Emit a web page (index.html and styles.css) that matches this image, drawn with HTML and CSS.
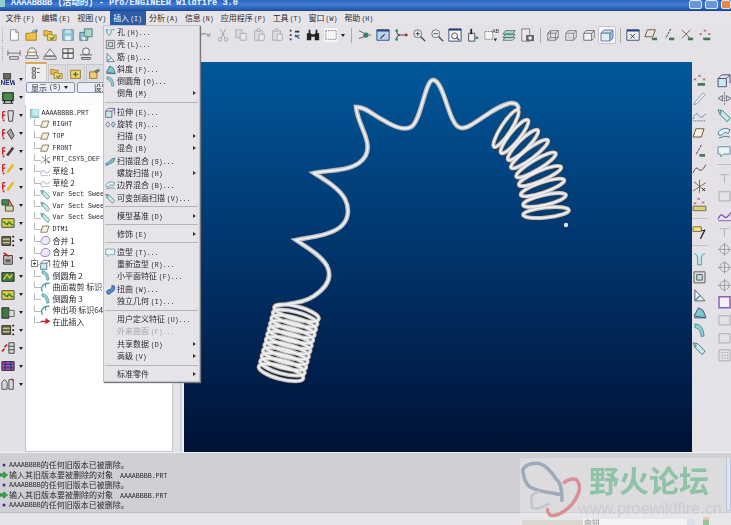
FILE: index.html
```html
<!DOCTYPE html>
<html lang="zh">
<head>
<meta charset="utf-8">
<title>Pro/ENGINEER Wildfire 3.0</title>
<link rel="stylesheet" href="styles.css">
</head>
<body>
<svg class="sprite" xmlns="http://www.w3.org/2000/svg">
<defs>
<symbol id="doc" viewBox="0 0 16 16"><path d="M4 2h6l3 3v9H4zM10 2v3h3" fill="#fff" stroke="#8a8a90"/></symbol>
<symbol id="folder" viewBox="0 0 16 16"><path d="M1 14V6h5l1-1h6v9z" fill="#eec04a" stroke="#a27c24"/><path d="M8 4q3-3 6 0l-1-3M14 4h-3" fill="none" stroke="#3b6fb0"/></symbol>
<symbol id="files" viewBox="0 0 16 16"><path d="M1 9V3h4l1 1h4v5z" fill="#eec04a" stroke="#a27c24"/><path d="M5 14V7h4l1 1h5v6z" fill="#f3d26e" stroke="#a27c24"/><path d="M8 11l2 2 3-3" fill="none" stroke="#2d8a3a" stroke-width="1.4"/></symbol>
<symbol id="save" viewBox="0 0 16 16"><path d="M2 2h12v12H2z" fill="#93c7d8" stroke="#5f869e"/><path d="M5 9h6v5H5z" fill="#e8eef2"/><path d="M5 2h6v4H5z" fill="#c6e2ea"/></symbol>
<symbol id="saveas" viewBox="0 0 16 16"><path d="M1 5h9v9H1z" fill="#8fc3d0" stroke="#466c80"/><path d="M6 1h9v9H6z" fill="#a8d6c4" stroke="#466c80"/><path d="M4 10h3v4H4z" fill="#eee"/></symbol>
<symbol id="dim" viewBox="0 0 16 16"><path d="M1 4v6M15 4v6M1 7h14M3 11h10v3H3z" fill="#ddd" stroke="#666"/></symbol>
<symbol id="dim2" viewBox="0 0 16 16"><path d="M3 9V6a5 5 0 0 1 10 0v3M1 10h14v3H1z" fill="#eee" stroke="#666"/><path d="M3 6h10" stroke="#b0762c"/></symbol>
<symbol id="dim3" viewBox="0 0 16 16"><path d="M8 2l6 8H2zM1 11h14v3H1z" fill="#eee" stroke="#666"/></symbol>
<symbol id="dim4" viewBox="0 0 16 16"><path d="M2 2h12v5H2zM2 7h12v6H2zM8 2v11" fill="#eee" stroke="#444"/></symbol>
<symbol id="dim5" viewBox="0 0 16 16"><circle cx="8" cy="5" r="4" fill="#eee" stroke="#555"/><path d="M1 9h14M3 12h10v2H3z" fill="#ddd" stroke="#555"/></symbol>
<symbol id="redo" viewBox="0 0 16 16"><path d="M2 10a6 5 0 0 1 11-1l1-3M13 9h-3" fill="none" stroke="#9a9aa0" stroke-width="1.2"/></symbol>
<symbol id="cut" viewBox="0 0 16 16"><path d="M5 1l5 10M11 1L6 11" stroke="#a0a0a8" fill="none"/><circle cx="4.5" cy="13" r="2" fill="none" stroke="#a0a0a8"/><circle cx="11.5" cy="13" r="2" fill="none" stroke="#a0a0a8"/></symbol>
<symbol id="copy" viewBox="0 0 16 16"><path d="M2 2h7v9H2z" fill="#dcdce2" stroke="#aaa"/><path d="M7 6h7v8H7z" fill="#e8e8ec" stroke="#aaa"/></symbol>
<symbol id="paste" viewBox="0 0 16 16"><path d="M3 3h9v11H3z" fill="#dddde2" stroke="#aaa"/><path d="M6 1h3v3H6zM8 7h6v7H8z" fill="#ececf0" stroke="#aaa"/></symbol>
<symbol id="regen" viewBox="0 0 16 16"><path d="M3 2v2M3 7v2M3 12v2M8 4h5" stroke="#333" stroke-width="2" fill="none"/><path d="M8 10l5-2" stroke="#2a6f3a" stroke-width="1.5"/><path d="M8 8l5 4" stroke="#2a56a0" stroke-width="1.3"/></symbol>
<symbol id="binoc" viewBox="0 0 16 16"><path d="M1 6h5v8H1zM10 6h5v8h-5zM3 2h2v4H3zM11 2h2v4h-2zM6 7h4v3H6z" fill="#222"/></symbol>
<symbol id="dash" viewBox="0 0 16 16"><path d="M0 0h16v16H0z" fill="#f5f5f6"/><path d="M2 3h12v10H2z" fill="none" stroke="#777" stroke-dasharray="1.5 1"/></symbol>
<symbol id="rep" viewBox="0 0 16 16"><circle cx="9" cy="8" r="3" fill="#2d8070"/><path d="M1 3l6 3M1 12l6-2" stroke="#555"/><path d="M12 8h3" stroke="#a33"/></symbol>
<symbol id="winpen" viewBox="0 0 16 16"><path d="M1 2h14v12H1z" fill="#b8d4ee" stroke="#25457c"/><path d="M1 2h14v2H1z" fill="#25457c"/><path d="M5 12l5-5" stroke="#444" stroke-width="1.4"/></symbol>
<symbol id="node" viewBox="0 0 16 16"><circle cx="3" cy="3" r="1.6" fill="#2a9a55"/><circle cx="3" cy="13" r="1.6" fill="#2a9a55"/><circle cx="14" cy="8" r="1.6" fill="#c02a2a"/><path d="M3 4q0 4 4 4h7M3 12q0-4 4-4" fill="none" stroke="#333"/></symbol>
<symbol id="zin" viewBox="0 0 16 16"><circle cx="6.5" cy="6.5" r="4.5" fill="#eef4f8" stroke="#5c6470"/><path d="M10 10l5 5" stroke="#444" stroke-width="1.6"/><path d="M4 6.5h5M6.5 4v5" stroke="#333"/></symbol>
<symbol id="zout" viewBox="0 0 16 16"><circle cx="6.5" cy="6.5" r="4.5" fill="#eef4f8" stroke="#5c6470"/><path d="M10 10l5 5" stroke="#444" stroke-width="1.6"/><path d="M4 6.5h5" stroke="#333"/></symbol>
<symbol id="zwin" viewBox="0 0 16 16"><path d="M1 1h14v14H1z" fill="#f4f6f8" stroke="#25457c"/><path d="M1 1h14v2H1z" fill="#25457c"/><circle cx="7.5" cy="9" r="3.4" fill="none" stroke="#444"/><path d="M10 11l3 3" stroke="#444" stroke-width="1.3"/></symbol>
<symbol id="spin" viewBox="0 0 16 16"><path d="M3 6h7v9H3z" fill="#eee" stroke="#444"/><path d="M6 1v6" stroke="#222" stroke-width="2"/><path d="M11 9l4 2-4 2z" fill="#2a7a6a"/></symbol>
<symbol id="ab" viewBox="0 0 16 16"><path d="M1 4h9v9H1z" fill="#f4f4f4" stroke="#777" stroke-dasharray="2 1"/><text x="9" y="6" font-size="6" fill="#333" font-family="Liberation Sans">AB</text><path d="M11 12h4l-2 3z" fill="#222"/></symbol>
<symbol id="layers" viewBox="0 0 16 16"><path d="M4 3h11l-3 4H1zM4 7h11l-3 4H1z" fill="#a8d8c8" stroke="#49786c"/><path d="M4 11h11l-3 3H1z" fill="none" stroke="#49786c"/></symbol>
<symbol id="cam" viewBox="0 0 16 16"><path d="M2 1h9v14H2z" fill="#e8e8ec" stroke="#777"/><path d="M7 8h9v7H7z" fill="#666"/><circle cx="11.5" cy="11.5" r="2" fill="#eee"/></symbol>
<symbol id="cube1" viewBox="0 0 16 16"><path d="M2 6h9v8H2zM5 3h9v8H5zM2 6l3-3M11 6l3-3M2 14l3-3M11 14l3-3" fill="none" stroke="#777"/></symbol>
<symbol id="cube2" viewBox="0 0 16 16"><path d="M2 6h9v8H2zM2 6l3-3h9l-3 3M11 14l3-3V3" fill="none" stroke="#777"/><path d="M5 3v8h9" fill="none" stroke="#aaa" stroke-dasharray="1.5 1"/></symbol>
<symbol id="cube3" viewBox="0 0 16 16"><path d="M2 6h9v8H2zM2 6l3-3h9l-3 3M11 14l3-3V3" fill="#f2f2f4" stroke="#666"/></symbol>
<symbol id="cube4" viewBox="0 0 16 16"><path d="M2 6h9v8H2z" fill="#d8f2f2" stroke="#77a"/><path d="M2 6l3-3h9l-3 3z" fill="#bfe6ec" stroke="#77a"/><path d="M11 14l3-3V3l-3 3z" fill="#7fc8d4" stroke="#77a"/></symbol>
<symbol id="dtmx" viewBox="0 0 16 16"><path d="M1 2h14v12H1z" fill="#f4f4f4" stroke="#25457c"/><path d="M1 2h14v2H1z" fill="#25457c"/><path d="M5 7l5 5M10 7l-5 5" stroke="#222"/></symbol>
<symbol id="plane" viewBox="0 0 16 16"><path d="M4 3h9l-3 9H1z" fill="#f6f1e0" stroke="#6a4a30"/></symbol>
<symbol id="planeg" viewBox="0 0 16 16"><path d="M4 2h9l-3 8H1z" fill="none" stroke="#6a4a30"/><path d="M9 11h6v3H9z" fill="#3f7a54"/></symbol>
<symbol id="axis" viewBox="0 0 16 16"><path d="M10 1L4 12" stroke="#333" stroke-dasharray="3 1"/><path d="M8 11h6v3H8z" fill="#3f7a54"/></symbol>
<symbol id="csysg" viewBox="0 0 16 16"><path d="M2 2l10 10M12 2L2 12" stroke="#7a5a40"/><path d="M9 11h6v3H9z" fill="#3f7a54"/></symbol>
<symbol id="ptsg" viewBox="0 0 16 16"><path d="M7 2l2 2M9 2L7 4M2 6l2 2M4 6L2 8M12 6l2 2M14 6l-2 2" stroke="#a03a3a"/><path d="M6 11h8v3H6z" fill="#3f7a54"/></symbol>
<symbol id="pen" viewBox="0 0 16 16"><path d="M12 2l2 2-9 10-3 1 1-3z" fill="#eef2f6" stroke="#8a96a6"/></symbol>
<symbol id="sk" viewBox="0 0 16 16"><path d="M1 12q3-9 6-4t8-2" fill="none" stroke="#3563a8" stroke-dasharray="2 1"/><path d="M1 14h14" stroke="#555" stroke-dasharray="1 1"/></symbol>
<symbol id="curve" viewBox="0 0 16 16"><path d="M1 13q3-8 6-4t8-5" fill="none" stroke="#5a3a30"/></symbol>
<symbol id="csys" viewBox="0 0 16 16"><path d="M8 1v14M1 13L15 4M2 3l12 10" stroke="#8a5f3a" fill="none"/><path d="M11 10l3 3M14 10l-3 3" stroke="#222"/></symbol>
<symbol id="pts" viewBox="0 0 16 16"><path d="M6 1l2 2M8 1L6 3M2 6l2 2M4 6L2 8M11 5l2 2M13 5l-2 2" stroke="#a03a3a"/><path d="M1 10h14v5H1z" fill="#e0d070" stroke="#665"/></symbol>
<symbol id="ann" viewBox="0 0 16 16"><path d="M1 2h9v5H1z" fill="#f2e68a" stroke="#7a6a20"/><path d="M14 5L9 15" stroke="#222" stroke-width="1.4"/><path d="M10 6h4" stroke="#222"/></symbol>
<symbol id="hole" viewBox="0 0 16 16"><path d="M2 4q1 8 4 8t3-8M9 4h5" fill="none" stroke="#43a7a7" stroke-width="1.4"/><path d="M2 4h3" stroke="#555"/></symbol>
<symbol id="shell" viewBox="0 0 16 16"><path d="M2 2h12v12H2z" fill="#ddd" stroke="#555"/><path d="M5 5h6v6H5z" fill="#b9e0e4" stroke="#555"/></symbol>
<symbol id="rib" viewBox="0 0 16 16"><path d="M3 2v12h11z" fill="#e8f2f2" stroke="#557"/><path d="M3 14l6-6" stroke="#3a9a9a" stroke-width="1.5"/></symbol>
<symbol id="draft" viewBox="0 0 16 16"><path d="M2 12l5-9 5 3 3 8z" fill="#7cc8c4" stroke="#357"/><path d="M2 14h12" stroke="#357"/></symbol>
<symbol id="round" viewBox="0 0 16 16"><path d="M3 1q9 0 10 13l-3 1Q9 6 3 5z" fill="#8fd0d4" stroke="#4a8a90"/></symbol>
<symbol id="ext" viewBox="0 0 16 16"><path d="M1 6h9v9H1z" fill="#c4ecec" stroke="#447"/><path d="M5 2h9v9" fill="none" stroke="#447"/><path d="M10 6l4-4M1 6l4-4" stroke="#447"/></symbol>
<symbol id="rev" viewBox="0 0 16 16"><path d="M1 8l3-4 3 4-3 4z" fill="none" stroke="#557"/><path d="M9 8l3-4 3 4-3 4z" fill="#aadada" stroke="#557"/></symbol>
<symbol id="sweep" viewBox="0 0 16 16"><path d="M1 11l4-2 5-5 5-1-3 6-6 3-4 2z" fill="#6cc4c4" stroke="#3a7a8a"/></symbol>
<symbol id="bound" viewBox="0 0 16 16"><path d="M1 7q6-7 13-3l-2 4-4-1-3 3H2z" fill="#e4f2f4" stroke="#447a9a"/><path d="M2 13q6-3 12-1" fill="none" stroke="#447a9a"/></symbol>
<symbol id="var" viewBox="0 0 16 16"><path d="M1 2l5 1 8 8-3 4-8-8z" fill="#cfe8e8" stroke="#3a7a8a"/><path d="M4 2v5" stroke="#3a7a8a"/></symbol>
<symbol id="style" viewBox="0 0 16 16"><path d="M1 3h13v8H7l-3 3v-3H1z" fill="#e8f6f8" stroke="#5a8aa6"/></symbol>
<symbol id="warp" viewBox="0 0 16 16"><path d="M3 14q-2-5 3-6t4-6l4 1q1 7-4 9t-3 3z" fill="#4a8ad0" stroke="#24508a"/></symbol>
<symbol id="merge" viewBox="0 0 16 16"><path d="M6 2q6-1 8 3t-2 8q-5 2-9 0T2 7q1-4 4-5z" fill="#efe6f6" stroke="#7a5ea6"/></symbol>
<symbol id="trim" viewBox="0 0 16 16"><path d="M14 2Q6 1 3 7q-2 4 1 7" fill="none" stroke="#4aa0a0" stroke-width="2"/><path d="M8 3v5" stroke="#555"/></symbol>
<symbol id="ins" viewBox="0 0 16 16"><path d="M1 8h7V4l7 4.500-7 4.500V10H1z" fill="#c4202a" transform="translate(0 -1)"/></symbol>
<symbol id="newf" viewBox="0 0 16 16"><path d="M3 0h8v7H3z" fill="#6a6a5c" stroke="#333"/><text x="-.5" y="14" font-size="7.500" font-weight="700" fill="#1c2a70" font-family="Liberation Sans">NEW</text></symbol>
<symbol id="gbox" viewBox="0 0 16 16"><path d="M2 2h12v9H2z" fill="#4c8a4a" stroke="#1f2a20" stroke-width="1.400"/><path d="M4 11v3M12 11v3M2 14h12" stroke="#222" stroke-width="1.400"/></symbol>
<symbol id="gfeat" viewBox="0 0 16 16"><path d="M1 2h8v6H1z" fill="#4c8a4a" stroke="#243"/><path d="M5 9h9v6H5z" fill="#d9d9a0" stroke="#443"/><path d="M9 2l4 7" stroke="#c02020" stroke-width="1.4"/></symbol>
<symbol id="fl1" viewBox="0 0 16 16"><path d="M2 3h3M2 3v8M2 7h3" stroke="#c92020" stroke-width="1.6" fill="none"/><path d="M2 13h2" stroke="#c92020" stroke-width="2"/><path d="M8 2h6v4l-1 8h-4L8 6z" fill="#dcdce2" stroke="#333"/></symbol>
<symbol id="fl2" viewBox="0 0 16 16"><path d="M2 3h3M2 3v8M2 7h3" stroke="#c92020" stroke-width="1.6" fill="none"/><path d="M2 13h2" stroke="#c92020" stroke-width="2"/><path d="M7 6l4-4 4 8-3 4z" fill="#9aa3a6" stroke="#333"/></symbol>
<symbol id="fl3" viewBox="0 0 16 16"><path d="M2 3h3M2 3v8M2 7h3" stroke="#c92020" stroke-width="1.6" fill="none"/><path d="M2 13h2" stroke="#c92020" stroke-width="2"/><path d="M7 12l7-9" stroke="#444" stroke-width="3"/></symbol>
<symbol id="fl4" viewBox="0 0 16 16"><path d="M2 3h3M2 3v8M2 7h3" stroke="#c92020" stroke-width="1.6" fill="none"/><path d="M2 13h2" stroke="#c92020" stroke-width="2"/><path d="M7 12l7-9" stroke="#e0c020" stroke-width="3"/></symbol>
<symbol id="g1" viewBox="0 0 16 16"><path d="M1 3h14v10H1z" fill="#3f7a3f" stroke="#222"/><path d="M3 11l4-6 3 4 3-4" fill="none" stroke="#e8d040" stroke-width="1.4"/></symbol>
<symbol id="g2" viewBox="0 0 16 16"><path d="M1 3h14v10H1z" fill="#dcc838" stroke="#444"/><path d="M2 6l5 4 2-3 5 4" fill="none" stroke="#284" stroke-width="1.6"/></symbol>
<symbol id="g3" viewBox="0 0 16 16"><path d="M1 2h8v12H1z" fill="#3f7a3f" stroke="#222"/><path d="M9 5h6v7H9z" fill="#ddd" stroke="#555"/></symbol>
<symbol id="g4" viewBox="0 0 16 16"><path d="M1 3h10v10H1z" fill="#6c6c3c" stroke="#222"/><path d="M2 6h8M2 10h8" stroke="#eee"/><path d="M13 3h2M13 8h2M13 13h2" stroke="#222" stroke-width="2"/></symbol>
<symbol id="g5" viewBox="0 0 16 16"><path d="M1 12l3-3M4 7l3-3" stroke="#c02020" stroke-width="2"/><path d="M9 2h6v12H9z" fill="#ddd" stroke="#333"/><path d="M9 6h6M9 10h6" stroke="#333"/></symbol>
<symbol id="g6" viewBox="0 0 16 16"><path d="M1 3h14v10H1z" fill="#b048a0" stroke="#223"/><path d="M2 6h12M2 10h12M5 3v10M11 3v10" stroke="#20408a" stroke-width="1.4"/></symbol>
<symbol id="g7" viewBox="0 0 16 16"><path d="M1 14V6l3-3 3 3v8zM9 14V3h5v11z" fill="#d8d8d8" stroke="#445"/><path d="M12 2l2 2" stroke="#c02020" stroke-width="1.6"/></symbol>
<symbol id="g8" viewBox="0 0 16 16"><path d="M3 4h10v10H3z" fill="#bdbdb5" stroke="#333"/><path d="M3 1l6 4" stroke="#c02020" stroke-width="2"/><path d="M5 8h6v4H5z" fill="#666"/></symbol>
<symbol id="mir" viewBox="0 0 16 16"><path d="M8 1v14" stroke="#777" stroke-dasharray="2 1"/><path d="M6 5L1 8l5 3zM10 5l5 3-5 3z" fill="#cfe4ea" stroke="#667"/></symbol>
<symbol id="tee" viewBox="0 0 16 16"><path d="M2 2q4 0 4 6v6h4V8q0-6 4-6" fill="#bfeef0" stroke="#5a8a96"/></symbol>
<symbol id="cl" viewBox="0 0 16 16"><path d="M3 4h10M8 4v9" stroke="#b0b0b8" fill="none"/></symbol>
<symbol id="circ" viewBox="0 0 16 16"><circle cx="8" cy="8" r="5" fill="none" stroke="#9a9aa0"/><path d="M8 1v14M1 8h14" stroke="#9a9aa0"/></symbol>
<symbol id="box" viewBox="0 0 16 16"><path d="M2 2h12v12H2z" fill="#f3f0f8" stroke="#8a60b0" stroke-width="1.6"/></symbol>
<symbol id="box2" viewBox="0 0 16 16"><path d="M2 3h12v10H2z" fill="none" stroke="#a8a8b0"/></symbol>
<symbol id="grid" viewBox="0 0 16 16"><path d="M2 2h12v12H2z" fill="none" stroke="#a8a8b0"/><path d="M5 5h1M8 5h1M11 5h1M5 8h1M8 8h1M11 8h1M5 11h1M8 11h1M11 11h1" stroke="#777"/></symbol>
<symbol id="wave" viewBox="0 0 16 16"><path d="M1 13q3-7 6-3t8-4" fill="none" stroke="#7a4ab0" stroke-width="1.4"/><path d="M1 15h14" stroke="#7a4ab0"/></symbol>
<symbol id="tabt" viewBox="0 0 16 16"><path d="M4 2h4v3H4zM4 7h4v3H4zM4 12h4v3H4zM10 3h3M10 8h3" fill="#eee" stroke="#444"/></symbol>
<symbol id="tabb" viewBox="0 0 16 16"><path d="M2 14V4h12v10z" fill="#f0d070" stroke="#8a6a20"/><path d="M8 6v6M5 9h6" stroke="#3a7a3a" stroke-width="1.5"/></symbol>
<symbol id="tabm" viewBox="0 0 16 16"><path d="M2 14V6h9v8z" fill="#f0d070" stroke="#8a6a20"/><path d="M7 5l6-3 2 3-5 3z" fill="#777"/></symbol>
<symbol id="part" viewBox="0 0 16 16"><path d="M2 2h12v12H2z" fill="#8ed8dc" stroke="#7a9aa8"/><path d="M5 2h9v9H5z" fill="#c8eef0"/></symbol>
<symbol id="msgi" viewBox="0 0 10 10"><circle cx="5" cy="5" r="1.9" fill="#2a3a8c"/></symbol>
<symbol id="msga" viewBox="0 0 10 10"><path d="M0 3.500h4.500V1L9.500 5 4.500 9V6.500H0z" fill="#37a84a" stroke="#157034" stroke-width=".7"/></symbol>
</defs>
</svg>

<div class="app">
  <header class="title">
    <i class="title-ic"></i>
    <span class="title-text">AAAABBBB (活动的) - Pro/ENGINEER Wildfire 3.0</span>
    <div class="win-btns"><i class="wb"></i><i class="wb"></i><i class="wb wb-x"></i></div>
  </header>

  <nav class="menubar">
    <span class="mi">文件<b>(F)</b></span><span class="mi">编辑<b>(E)</b></span><span class="mi">视图<b>(V)</b></span><span class="mi on">插入<b>(I)</b></span><span class="mi">分析<b>(A)</b></span><span class="mi">信息<b>(N)</b></span><span class="mi">应用程序<b>(P)</b></span><span class="mi">工具<b>(T)</b></span><span class="mi">窗口<b>(W)</b></span><span class="mi">帮助<b>(H)</b></span>
  </nav>

  <div class="tb">
    <i class="grip"></i>
    <svg class="t"><use href="#doc"/></svg><svg class="t"><use href="#folder"/></svg><svg class="t"><use href="#files"/></svg><svg class="t"><use href="#save"/></svg><svg class="t"><use href="#saveas"/></svg>
    <span class="tgap"></span>
    <svg class="t"><use href="#redo"/></svg><svg class="t"><use href="#cut"/></svg><svg class="t"><use href="#copy"/></svg><svg class="t"><use href="#paste"/></svg><svg class="t"><use href="#paste"/></svg><svg class="t"><use href="#regen"/></svg><svg class="t"><use href="#binoc"/></svg><svg class="t"><use href="#dash"/></svg>
    <i class="drop"></i><i class="sep sep-a"></i>
    <svg class="t"><use href="#rep"/></svg><svg class="t"><use href="#winpen"/></svg><svg class="t"><use href="#node"/></svg><svg class="t"><use href="#zin"/></svg><svg class="t"><use href="#zout"/></svg><svg class="t"><use href="#zwin"/></svg><svg class="t"><use href="#spin"/></svg><svg class="t"><use href="#ab"/></svg><svg class="t"><use href="#layers"/></svg><svg class="t"><use href="#cam"/></svg>
    <i class="sep"></i>
    <svg class="t"><use href="#cube1"/></svg><svg class="t"><use href="#cube2"/></svg><svg class="t"><use href="#cube3"/></svg><svg class="t t-on"><use href="#cube4"/></svg>
    <i class="sep"></i>
    <svg class="t"><use href="#dtmx"/></svg><svg class="t"><use href="#planeg"/></svg><svg class="t"><use href="#axis"/></svg><svg class="t"><use href="#csysg"/></svg><svg class="t"><use href="#ptsg"/></svg>
  </div>
  <div class="tb">
    <i class="grip"></i>
    <svg class="t"><use href="#dim"/></svg><svg class="t"><use href="#dim2"/></svg><svg class="t"><use href="#dim3"/></svg><svg class="t"><use href="#dim4"/></svg><svg class="t"><use href="#dim5"/></svg>
  </div>

  <div class="main">
    <aside class="ltools">
      <div class="lt"><svg class="l"><use href="#newf"/></svg><i class="drop"></i></div>
      <div class="lt"><svg class="l"><use href="#gbox"/></svg><i class="drop"></i></div>
      <div class="lt"><svg class="l"><use href="#fl1"/></svg><i class="drop"></i></div>
      <div class="lt"><svg class="l"><use href="#fl2"/></svg><i class="drop"></i></div>
      <div class="lt"><svg class="l"><use href="#fl3"/></svg><i class="drop"></i></div>
      <div class="lt"><svg class="l"><use href="#fl4"/></svg><i class="drop"></i></div>
      <div class="lt"><svg class="l"><use href="#fl4"/></svg><i class="drop"></i></div>
      <div class="lt"><svg class="l"><use href="#gfeat"/></svg><i class="drop"></i></div>
      <div class="lt"><svg class="l"><use href="#g2"/></svg><i class="drop"></i></div>
      <div class="lt"><svg class="l"><use href="#g4"/></svg><i class="drop"></i></div>
      <div class="lt"><svg class="l"><use href="#g8"/></svg><i class="drop"></i></div>
      <div class="lt"><svg class="l"><use href="#g1"/></svg><i class="drop"></i></div>
      <div class="lt"><svg class="l"><use href="#g2"/></svg><i class="drop"></i></div>
      <div class="lt"><svg class="l"><use href="#g3"/></svg><i class="drop"></i></div>
      <div class="lt"><svg class="l"><use href="#g4"/></svg><i class="drop"></i></div>
      <div class="lt"><svg class="l"><use href="#g5"/></svg><i class="drop"></i></div>
      <div class="lt"><svg class="l"><use href="#g6"/></svg><i class="drop"></i></div>
      <div class="lt"><svg class="l"><use href="#g7"/></svg><i class="drop"></i></div>
    </aside>

    <section class="panel">
      <div class="tabs">
        <span class="tab tab-on"><svg class="tabi"><use href="#tabt"/></svg></span>
        <span class="tab"><svg class="tabi"><use href="#files"/></svg></span>
        <span class="tab"><svg class="tabi"><use href="#tabb"/></svg></span>
        <span class="tab"><svg class="tabi"><use href="#tabm"/></svg></span>
      </div>
      <div class="pbtns">
        <span class="pbtn pbtn-a">显示<b>(S)</b><i class="drop"></i></span>
        <span class="pbtn pbtn-b">设置</span>
      </div>
      <ul class="tree">
        <li class="root"><svg class="n"><use href="#part"/></svg><b>AAAABBBB.PRT</b></li>
        <li><svg class="n"><use href="#plane"/></svg><b>RIGHT</b></li>
        <li><svg class="n"><use href="#plane"/></svg><b>TOP</b></li>
        <li><svg class="n"><use href="#plane"/></svg><b>FRONT</b></li>
        <li><svg class="n"><use href="#csys"/></svg><b>PRT_CSYS_DEF</b></li>
        <li><svg class="n"><use href="#sk"/></svg>草绘 1</li>
        <li><svg class="n"><use href="#sk"/></svg>草绘 2</li>
        <li><svg class="n"><use href="#var"/></svg><b>Var Sect Sweep</b></li>
        <li><svg class="n"><use href="#var"/></svg><b>Var Sect Sweep</b></li>
        <li><svg class="n"><use href="#var"/></svg><b>Var Sect Sweep</b></li>
        <li><svg class="n"><use href="#plane"/></svg><b>DTM1</b></li>
        <li><svg class="n"><use href="#merge"/></svg>合并 1</li>
        <li><svg class="n"><use href="#merge"/></svg>合并 2</li>
        <li><i class="plus"></i><svg class="n"><use href="#ext"/></svg>拉伸 1</li>
        <li><svg class="n"><use href="#round"/></svg>倒圆角 2</li>
        <li><svg class="n"><use href="#trim"/></svg>曲面裁剪 标识</li>
        <li><svg class="n"><use href="#round"/></svg>倒圆角 3</li>
        <li><svg class="n"><use href="#trim"/></svg>伸出项 标识64</li>
        <li><svg class="n"><use href="#ins"/></svg>在此插入</li>
      </ul>
    </section>

    <div class="gutter"></div>

    <div class="view">
      <svg class="spring" viewBox="183 62 508 389" xmlns="http://www.w3.org/2000/svg">
        <defs>
          <path id="wire" d="M275 306C290 303 303 303 313 296C328 286 331 276 326 266C320 255 305 247 295 240C310 237 326 236 338 228C348 221 349 209 344 199C338 188 324 180 313 173C325 170 345 172 358 163C368 156 368 147 365 138C362 128 356 118 355 107C365 107 372 115 382 120C392 126 402 131 410 127C420 122 424 80 432 80C441 80 446 110 452 120C456 129 462 130 470 125C482 118 497 105 510 103C516 103 518 106 517 110"/>
          <g id="coilA">
            <ellipse cx="295.500" cy="313" rx="23" ry="6.500" transform="rotate(15 295.500 313)"/>
            <ellipse cx="294.100" cy="318.400" rx="23" ry="6.500" transform="rotate(15 294.100 318.400)"/>
            <ellipse cx="292.700" cy="323.800" rx="23" ry="6.500" transform="rotate(15 292.700 323.800)"/>
            <ellipse cx="291.300" cy="329.200" rx="23" ry="6.500" transform="rotate(15 291.300 329.200)"/>
            <ellipse cx="289.900" cy="334.600" rx="23" ry="6.500" transform="rotate(15 289.900 334.600)"/>
            <ellipse cx="288.500" cy="340" rx="23" ry="6.500" transform="rotate(15 288.500 340)"/>
            <ellipse cx="287.100" cy="345.400" rx="23" ry="6.500" transform="rotate(15 287.100 345.400)"/>
            <ellipse cx="285.700" cy="350.800" rx="23" ry="6.500" transform="rotate(15 285.700 350.800)"/>
            <ellipse cx="284.300" cy="356.200" rx="23" ry="6.500" transform="rotate(15 284.300 356.200)"/>
            <ellipse cx="282.900" cy="361.600" rx="23" ry="6.500" transform="rotate(15 282.900 361.600)"/>
            <ellipse cx="281.500" cy="367" rx="23" ry="6.500" transform="rotate(15 281.500 367)"/>
            <ellipse cx="280" cy="372.500" rx="23" ry="6.500" transform="rotate(15 280 372.500)"/>
          </g>
          <g id="coilB">
            <ellipse cx="505" cy="128.500" rx="22" ry="5" transform="rotate(-57 505 128.500)"/>
            <ellipse cx="513.500" cy="136.500" rx="21.300" ry="5" transform="rotate(-51 513.500 136.500)"/>
            <ellipse cx="522" cy="145" rx="21" ry="5" transform="rotate(-45 522 145)"/>
            <ellipse cx="528.500" cy="154" rx="23" ry="5" transform="rotate(-37 528.500 154)"/>
            <ellipse cx="535" cy="165" rx="23" ry="5" transform="rotate(-31 535 165)"/>
            <ellipse cx="539" cy="176" rx="23" ry="5" transform="rotate(-23 539 176)"/>
            <ellipse cx="541.500" cy="187.500" rx="23" ry="5" transform="rotate(-19 541.500 187.500)"/>
            <ellipse cx="543.500" cy="200" rx="22" ry="5" transform="rotate(-13 543.500 200)"/>
            <ellipse cx="545" cy="212.500" rx="23" ry="5" transform="rotate(-6 545 212.500)"/>
          </g>
        </defs>
        <use class="w-edge" href="#wire"/>
        <g class="w-out"><use href="#coilA"/><use href="#coilB"/></g>
        <g class="w-mid"><use href="#wire"/><use href="#coilA"/><use href="#coilB"/></g>
        <g class="w-hi"><use href="#wire"/><use href="#coilA"/><use href="#coilB"/></g>
        <circle class="w-dot" cx="565" cy="225" r="2.200"/>
      </svg>
    </div>

    <aside class="rtools">
      <div class="rcol">
        <svg class="r"><use href="#ptsg"/></svg>
        <svg class="r"><use href="#pen"/></svg>
        <svg class="r"><use href="#sk"/></svg>
        <svg class="r"><use href="#plane"/></svg>
        <svg class="r"><use href="#axis"/></svg>
        <svg class="r"><use href="#curve"/></svg>
        <svg class="r"><use href="#csys"/></svg>
        <svg class="r"><use href="#pts"/></svg>
        <i class="rsep"></i>
        <svg class="r"><use href="#ann"/></svg>
        <i class="rsep"></i>
        <svg class="r"><use href="#tee"/></svg>
        <svg class="r"><use href="#shell"/></svg>
        <svg class="r"><use href="#rib"/></svg>
        <svg class="r"><use href="#draft"/></svg>
        <svg class="r"><use href="#round"/></svg>
        <svg class="r"><use href="#var"/></svg>
      </div>
      <div class="rcol">
        <svg class="r"><use href="#ext"/></svg>
        <svg class="r"><use href="#mir"/></svg>
        <svg class="r"><use href="#var"/></svg>
        <svg class="r"><use href="#bound"/></svg>
        <svg class="r"><use href="#style"/></svg>
        <i class="rsep"></i>
        <svg class="r"><use href="#cl"/></svg>
        <svg class="r"><use href="#box2"/></svg>
        <svg class="r"><use href="#wave"/></svg>
        <svg class="r"><use href="#cl"/></svg>
        <svg class="r"><use href="#circ"/></svg>
        <svg class="r"><use href="#circ"/></svg>
        <svg class="r"><use href="#circ"/></svg>
        <svg class="r"><use href="#box"/></svg>
        <svg class="r"><use href="#box2"/></svg>
        <svg class="r"><use href="#box2"/></svg>
        <svg class="r"><use href="#grid"/></svg>
      </div>
    </aside>
  </div>

  <section class="msgs">
    <p><svg class="m"><use href="#msgi"/></svg><b>AAAABBBB</b>的任何旧版本已被删除。</p>
    <p><svg class="m"><use href="#msga"/></svg>输入其旧版本要被删除的对象<b class="fn">AAAABBBB.PRT</b></p>
    <p><svg class="m"><use href="#msgi"/></svg><b>AAAABBBB</b>的任何旧版本已被删除。</p>
    <p><svg class="m"><use href="#msga"/></svg>输入其旧版本要被删除的对象<b class="fn">AAAABBBB.PRT</b></p>
    <p><svg class="m"><use href="#msgi"/></svg><b>AAAABBBB</b>的任何旧版本已被删除。</p>
  </section>
  <footer class="status">
    <span class="st-tan"></span>
    <span class="st-sel">面组<i class="st-arrow"></i></span>
    <span class="st-icon"></span>
  </footer>
</div>

<div class="menu">
  <div class="row"><svg class="c"><use href="#hole"/></svg>孔 <b>(H)...</b></div>
  <div class="row"><svg class="c"><use href="#shell"/></svg>壳 <b>(L)...</b></div>
  <div class="row"><svg class="c"><use href="#rib"/></svg>筋 <b>(B)...</b></div>
  <div class="row"><svg class="c"><use href="#draft"/></svg>斜度 <b>(F)...</b></div>
  <div class="row"><svg class="c"><use href="#round"/></svg>倒圆角 <b>(O)...</b></div>
  <div class="row sub">倒角 <b>(M)</b></div>
  <hr>
  <div class="row"><svg class="c"><use href="#ext"/></svg>拉伸 <b>(E)...</b></div>
  <div class="row"><svg class="c"><use href="#rev"/></svg>旋转 <b>(R)...</b></div>
  <div class="row sub">扫描 <b>(S)</b></div>
  <div class="row sub">混合 <b>(B)</b></div>
  <div class="row"><svg class="c"><use href="#sweep"/></svg>扫描混合 <b>(S)...</b></div>
  <div class="row sub">螺旋扫描 <b>(H)</b></div>
  <div class="row"><svg class="c"><use href="#bound"/></svg>边界混合 <b>(B)...</b></div>
  <div class="row"><svg class="c"><use href="#var"/></svg>可变剖面扫描 <b>(V)...</b></div>
  <hr>
  <div class="row sub">模型基准 <b>(D)</b></div>
  <hr>
  <div class="row sub">修饰 <b>(E)</b></div>
  <hr>
  <div class="row"><svg class="c"><use href="#style"/></svg>造型 <b>(T)...</b></div>
  <div class="row">重新造型 <b>(R)...</b></div>
  <div class="row">小平面特征 <b>(F)...</b></div>
  <div class="row"><svg class="c"><use href="#warp"/></svg>扭曲 <b>(W)...</b></div>
  <div class="row">独立几何 <b>(I)...</b></div>
  <hr>
  <div class="row">用户定义特征 <b>(U)...</b></div>
  <div class="row off">外来曲面 <b>(F)...</b></div>
  <div class="row sub">共享数据 <b>(D)</b></div>
  <div class="row sub">高级 <b>(V)</b></div>
  <hr>
  <div class="row sub">标准零件</div>
</div>

<div class="mark">
  <svg class="mark-logo" viewBox="0 0 60 60" xmlns="http://www.w3.org/2000/svg">
    <path d="M40.700 41.700C42 30 38 20 35.700 20C30 10 22 3.300 15.700 3.300C6 3.300 0 8 2.300 13.300C3 20 5 24 9 27C20 33 32 32 40.700 35" fill="none" stroke="#9eaab8" stroke-width="3.500"/>
    <path d="M19 31.700C12 33 9 36 10.700 38.300C10 44 11 48 12.300 48.300C18 49 24 46 29 43.300" fill="none" stroke="#c0c8d0" stroke-width="2.500"/>
    <path d="M42.300 23.300C47 19 53 18 55.700 20C59 24 59 29 57.300 33.300C54 42 48 48 42.300 51.700C37 55 32 56 29 55C27 53 26 50 27.300 48.300" fill="none" stroke="#da8f92" stroke-width="3.500"/>
  </svg>
  <div class="mark-cn">野火论坛</div>
  <div class="mark-url">www.proewildfire.cn</div>
  <div class="mark-scroll"></div>
</div>
</body>
</html>
```

FILE: styles.css
```css
* { box-sizing: border-box; }
html, body { margin: 0; padding: 0; }
body {
  width: 731px;
  height: 525px;
  overflow: hidden;
  position: relative;
  background: #e4e2e6;
  color: #2a2a30;
  font: 8px/1 "Noto Sans CJK SC", sans-serif;
}
.sprite { position: absolute; width: 0; height: 0; }
b { font: 6.6px "Liberation Mono", monospace; }
i { display: block; font-style: normal; }

.app { display: flex; flex-direction: column; width: 731px; height: 525px; filter: blur(0.4px); }

.title {
  flex: 0 0 11px;
  height: 11px;
  display: flex;
  overflow: hidden;
  background: linear-gradient(#2b63b8, #3f7ed6 45%, #2557a8);
  border-bottom: 1px solid #1f4690;
}
.title-ic { flex: none; width: 5px; height: 7px; background: #8fd0c8; }
.title-text {
  margin: -3px 0 0 6px;
  color: #eef3fb;
  font: bold 8.6px/12px "Liberation Mono", "Noto Sans CJK SC", monospace;
}
.win-btns { display: flex; gap: 3px; margin-left: auto; }
.wb { width: 13px; height: 9px; background: #6b97d8; border: 1px solid #dfe8f6; border-radius: 2px; }
.wb-x { width: 10px; background: #e28a4c; }

.menubar { flex: 0 0 14px; display: flex; background: #e6e4e8; }
.mi { padding: 0 3.5px; line-height: 13px; height: 14px; white-space: nowrap; }
.mi:first-child { margin-left: 2px; }
.mi b { margin-left: 1px; }
.on { background: #2c5ca6; color: #f2f4fa; }

.tb { flex: 0 0 18.500px; height: 18.500px; display: flex; align-items: center; padding: 2px 0 0 2px; position: relative; }
.grip { width: 1px; height: 15px; margin-right: 2px; border-left: 1px dotted #aaa; }
.t { width: 18px; height: 14px; flex: none; }
.t-on { height: 18px; margin: -2px 0; background: #f8f8fa; border: 1px solid #c4c4ca; border-radius: 2px; }
.tgap { width: 101px; flex: none; }
.drop { width: 0; height: 0; flex: none; border: 2px solid transparent; border-top: 3px solid #222; border-bottom: 0; margin: 0 1px; }
.sep { flex: none; width: 8px; height: 15px; background: linear-gradient(#aaa, #aaa) center / 1px 100% no-repeat; }
.sep-a { width: 10px; }

.main { flex: 0 0 390px; height: 390px; display: flex; min-height: 0; }

.ltools { flex: 0 0 24.500px; display: flex; flex-direction: column; padding-top: 9px; background: #e3e1e5; }
.lt { flex: 0 0 17.900px; display: flex; align-items: center; gap: 3px; padding-left: 1px; }
.l { width: 14px; height: 14px; flex: none; }

.panel { flex: 0 0 148px; display: flex; flex-direction: column; }
.tabs { flex: 0 0 19px; display: flex; gap: 1px; align-items: flex-end; }
.tab { width: 18px; height: 17px; display: flex; align-items: center; justify-content: center; background: #dcdce0; border: 1px solid #c8c8cc; border-bottom: 0; }
.tab-on { width: 22px; height: 19px; background: #eeeef0; border-top: 2px solid #e0a850; }
.tabi { width: 13px; height: 13px; }
.pbtns { flex: 0 0 12px; display: flex; gap: 2px; padding: 1px 0 0 1px; }
.pbtn { display: flex; align-items: center; justify-content: center; gap: 2px; height: 11px; background: #eceef6; border: 1px solid #8a94b0; border-radius: 2px; }
.pbtn-a { width: 49px; }
.pbtn-b { width: 50px; }
.tree {
  flex: 1;
  margin: 12px 0 0;
  padding: 2.500px 0 0;
  list-style: none;
  background: #fff;
  border: 1px solid #c6c6ca;
  border-top: 0;
  overflow: hidden;
  box-shadow: 0 -12px 0 #fbfbfb;
}
.tree li {
  position: relative;
  display: flex;
  align-items: center;
  height: 11.600px;
  padding-left: 14px;
  white-space: nowrap;
}
.tree li::before { content: ""; position: absolute; left: 8px; top: 0; width: 6px; height: 6px; border-left: 1px solid #bbb; border-bottom: 1px solid #bbb; }
.tree li.root { padding-left: 3px; }
.tree li.root::before { display: none; }
.n { width: 11px; height: 11px; margin-right: 2px; flex: none; }
.plus { position: absolute; left: 5px; top: 2px; width: 7px; height: 7px; border: 1px solid #888; background: linear-gradient(#555, #555) center / 3px 1px no-repeat, linear-gradient(#555, #555) center / 1px 3px no-repeat, #fff; z-index: 1; }

.gutter { flex: 0 0 11px; background: linear-gradient(90deg, #e4e2e6 0 7px, #c8d2dc 7px 9px, #f0f0f2 9px); }

.view { flex: 0 0 508px; background: linear-gradient(#01589a, #013a74 40%, #001236); }
.spring { display: block; width: 508px; height: 389px; fill: none; stroke-linecap: round; }
.w-edge { stroke: #8a95a3; stroke-width: 4.800; }
.w-out { stroke: #3a3636; stroke-width: 5; }
.w-mid { stroke: #c6c6c8; stroke-width: 3.900; }
.w-hi { stroke: #f2f2f3; stroke-width: 1.600; }
.w-dot { fill: #dfe6ea; }

.rtools { flex: 0 0 40px; display: flex; gap: 9px; padding: 11px 0 0 0; overflow: hidden; background: #e4e2e6; }
.rcol { flex: 0 0 16px; display: flex; flex-direction: column; gap: 3px; }
.r { width: 15px; height: 14.700px; flex: none; }
.rsep { flex: none; height: 1px; margin: 3px 0; background: #c0c0c4; }

.msgs { flex: 0 0 61px; padding-top: 7px; background: #d0cfd3; border-top: 1px solid #f0f0f2; border-bottom: 1px solid #bcbcc0; overflow: hidden; }
.msgs p { display: flex; align-items: center; height: 10.100px; margin: 0; white-space: nowrap; }
.m { width: 8px; height: 8px; margin-right: 1px; flex: none; }
.fn { margin: 2px 0 0 7px; }

.status { flex: 1; display: flex; align-items: flex-end; padding-left: 522px; overflow: hidden; background: #e6e4e8; }
.st-tan { width: 61px; height: 5px; background: #cfc6b4; }
.st-sel { display: flex; justify-content: space-between; align-items: center; width: 112px; height: 6px; padding-left: 1px; background: #fff; line-height: 6px; overflow: hidden; }
.st-arrow { width: 8px; height: 6px; background: #ccd6e8; }
.st-icon { width: 6px; height: 8px; margin-left: 8px; background: linear-gradient(#d8a870 0 3px, #4a9a4a 3px); }

.menu {
  position: absolute;
  left: 103px;
  top: 25px;
  width: 97px;
  height: 357px;
  background: #e6e4e8;
  border: 1px solid #c2c2c8;
  box-shadow: 1px 1px 1px #77777c;
  filter: blur(0.4px);
}
.row { position: relative; height: 12.300px; padding-left: 13px; line-height: 12.300px; white-space: nowrap; }
.row .c { position: absolute; left: 1px; top: 1px; width: 11px; height: 11px; }
.sub::after { content: ""; position: absolute; right: 3px; top: 4px; border: 2.500px solid transparent; border-left: 3.500px solid #333; border-right: 0; }
.off { color: #a6a6ac; }
.menu hr { height: 1px; margin: 2.375px 1px; border: 0; background: #b4b4ba; }

.mark {
  position: absolute;
  left: 520px;
  top: 458px;
  width: 211px;
  height: 67px;
  background: rgba(232, 232, 234, 0.5);
  overflow: hidden;
  filter: blur(0.4px);
}
.mark-logo { position: absolute; left: 1px; top: 2px; width: 60px; height: 60px; }
.mark-cn {
  position: absolute;
  left: 69px;
  top: 6px;
  color: #8fc3a6;
  font: 700 30px/30px "Noto Sans CJK SC", sans-serif;
  white-space: nowrap;
}
.mark-url {
  position: absolute;
  left: 58px;
  top: 41px;
  color: #c9cdd2;
  font: 16.300px/18px "Liberation Sans", sans-serif;
  white-space: nowrap;
}
.mark-scroll { position: absolute; right: 0; top: -5px; width: 5px; height: 58px; background: #dfe6f2; border: 1px solid #b8c4da; }
```
